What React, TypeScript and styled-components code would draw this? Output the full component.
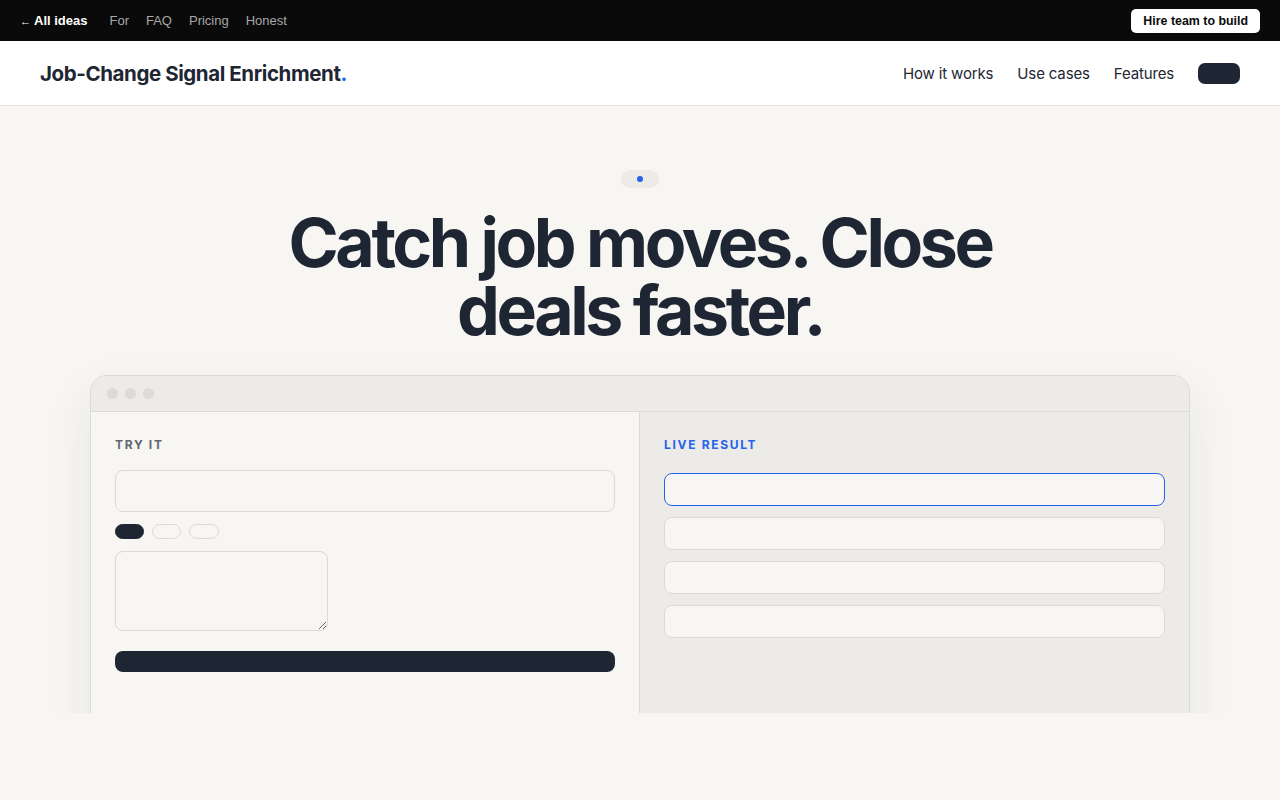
import React from 'react';
import styled, { createGlobalStyle } from 'styled-components';

// Base reset and page font
const GlobalStyle = createGlobalStyle`
  * { box-sizing: border-box; }
  html, body {
    margin: 0;
    padding: 0;
    background: #f7f6f2;
    font-family: 'Inter', 'Liberation Sans', sans-serif;
    color: #1e2633;
  }
`;

const ink = '#1e2633';
const blue = '#2563eb';
const line = '#dcdad5';

// Barra superior escura
const TopBar = styled.div`
  height: 41px;
  background: #0a0a0a;
  display: flex;
  align-items: center;
  justify-content: space-between;
  padding: 0 20px;
  font-family: 'Liberation Sans', Arial, sans-serif;
  font-size: 13px;
`;

const TopLinks = styled.div`
  display: flex;
  align-items: center;
  gap: 17px;
`;

const BackLink = styled.a`
  color: #fff;
  font-weight: 700;
  margin-right: 5px;
  text-decoration: none;
  span {
    font-weight: 400;
    font-size: 11px;
    margin-right: 3px;
  }
`;

const TopLink = styled.a`
  color: #a8a8a8;
  text-decoration: none;
`;

const HireButton = styled.button`
  background: #fff;
  color: #0a0a0a;
  border: none;
  border-radius: 5px;
  height: 24px;
  padding: 0 12px;
  font-family: 'Liberation Sans', Arial, sans-serif;
  font-size: 12.4px;
  font-weight: 700;
`;

// Navegação principal
const Navbar = styled.nav`
  height: 65px;
  background: #fff;
  border-bottom: 1px solid #e6e4df;
  display: flex;
  align-items: center;
  justify-content: space-between;
  padding: 0 40px;
`;

const Brand = styled.div`
  font-size: 20.5px;
  font-weight: 700;
  letter-spacing: -0.02em;
  color: ${ink};
  span { color: ${blue}; }
`;

const NavLinks = styled.div`
  display: flex;
  align-items: center;
  gap: 24px;
`;

const NavLink = styled.a`
  font-size: 15px;
  color: ${ink};
  letter-spacing: -0.01em;
  text-decoration: none;
`;

const NavCta = styled.button`
  width: 42px;
  height: 21px;
  border: none;
  border-radius: 7px;
  background: ${ink};
`;

// Hero
const Hero = styled.section`
  height: 607px;
  overflow: hidden;
  display: flex;
  flex-direction: column;
  align-items: center;
  padding-top: 64px;
`;

const Pill = styled.div`
  flex-shrink: 0;
  width: 38px;
  height: 18px;
  border-radius: 9px;
  background: #ecebe7;
  display: flex;
  align-items: center;
  justify-content: center;
  &::after {
    content: '';
    width: 6px;
    height: 6px;
    border-radius: 50%;
    background: ${blue};
  }
`;

const Title = styled.h1`
  margin: 20px 0 0;
  font-size: 68px;
  line-height: 68px;
  font-weight: 700;
  letter-spacing: -0.05em;
  text-align: center;
  color: ${ink};
  flex-shrink: 0;
`;

const Window = styled.div`
  margin-top: 31px;
  width: 1100px;
  border: 1px solid ${line};
  border-radius: 16px;
  overflow: hidden;
  background: #f7f6f2;
  box-shadow: 0 20px 50px rgba(30, 38, 51, 0.08);
  flex-shrink: 0;
`;

const WindowBar = styled.div`
  height: 36px;
  background: #ecebe7;
  border-bottom: 1px solid ${line};
  display: flex;
  align-items: center;
  gap: 7px;
  padding-left: 16px;
`;

const Dot = styled.span`
  width: 11px;
  height: 11px;
  border-radius: 50%;
  background: #dcdbd8;
`;

const Panes = styled.div`
  display: grid;
  grid-template-columns: 548px 1fr;
  height: 400px;
`;

const Pane = styled.div<{ $tint?: boolean }>`
  padding: 24px;
  background: ${p => (p.$tint ? '#ecebe7' : '#f7f6f2')};
  border-left: ${p => (p.$tint ? `1px solid ${line}` : 'none')};
  display: flex;
  flex-direction: column;
`;

const Label = styled.div<{ $accent?: boolean }>`
  font-size: 12px;
  line-height: 18px;
  font-weight: 700;
  letter-spacing: 0.14em;
  color: ${p => (p.$accent ? blue : '#5f6673')};
  margin-bottom: ${p => (p.$accent ? '19px' : '16px')};
`;

const Field = styled.div`
  height: 42px;
  border: 1px solid ${line};
  border-radius: 8px;
  background: #f7f6f2;
`;

const Chips = styled.div`
  display: flex;
  gap: 8px;
  margin: 12px 0;
`;

const Chip = styled.span<{ $on?: boolean; $w: number }>`
  width: ${p => p.$w}px;
  height: 15px;
  border-radius: 8px;
  background: ${p => (p.$on ? ink : 'transparent')};
  border: 1px solid ${p => (p.$on ? ink : line)};
`;

const TextArea = styled.textarea`
  width: 213px;
  height: 80px;
  border: 1px solid ${line};
  border-radius: 8px;
  background: #f7f6f2;
  outline: none;
  margin: 0;
  display: block;
`;

const RunButton = styled.button`
  margin-top: 20px;
  height: 21px;
  border: none;
  border-radius: 8px;
  background: ${ink};
`;

const Results = styled.div`
  display: flex;
  flex-direction: column;
  gap: 11px;
`;

const ResultRow = styled.div<{ $active?: boolean }>`
  height: 33px;
  border-radius: 8px;
  background: #f7f6f2;
  border: 1px solid ${p => (p.$active ? blue : line)};
`;

export default function App() {
  return (
    <>
      <GlobalStyle />
      <TopBar>
        <TopLinks>
          <BackLink href="#"><span>←</span>All ideas</BackLink>
          <TopLink href="#">For</TopLink>
          <TopLink href="#">FAQ</TopLink>
          <TopLink href="#">Pricing</TopLink>
          <TopLink href="#">Honest</TopLink>
        </TopLinks>
        <HireButton>Hire team to build</HireButton>
      </TopBar>
      <Navbar>
        <Brand>Job-Change Signal Enrichment<span>.</span></Brand>
        <NavLinks>
          <NavLink href="#">How it works</NavLink>
          <NavLink href="#">Use cases</NavLink>
          <NavLink href="#">Features</NavLink>
          <NavCta />
        </NavLinks>
      </Navbar>
      <Hero>
        <Pill />
        <Title>Catch job moves. Close<br />deals faster.</Title>
        <Window>
          <WindowBar>
            <Dot />
            <Dot />
            <Dot />
          </WindowBar>
          <Panes>
            <Pane>
              <Label>TRY IT</Label>
              <Field />
              <Chips>
                <Chip $on $w={29} />
                <Chip $w={29} />
                <Chip $w={30} />
              </Chips>
              <TextArea />
              <RunButton />
            </Pane>
            <Pane $tint>
              <Label $accent>LIVE RESULT</Label>
              <Results>
                <ResultRow $active />
                <ResultRow />
                <ResultRow />
                <ResultRow />
              </Results>
            </Pane>
          </Panes>
        </Window>
      </Hero>
    </>
  );
}
